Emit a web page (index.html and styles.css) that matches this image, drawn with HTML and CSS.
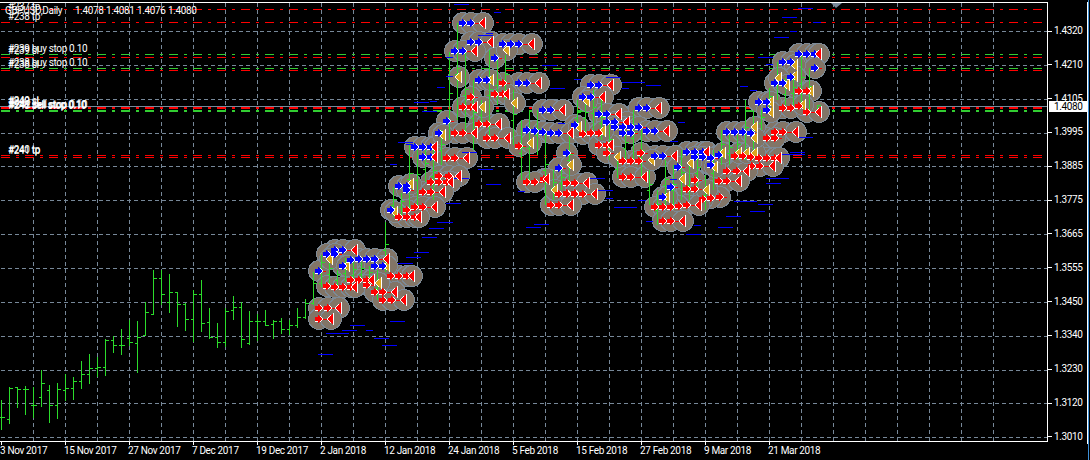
FILE: index.html
```html
<!DOCTYPE html>
<html>
<head>
	<meta charset="UTF-8">
	<title>GBPUSD,Daily</title>
	<link rel="stylesheet" href="styles.css">
</head>
<body>
	<div id="terminal">
		<div id="plot_box">
			<svg id="plot" width="1047" height="438" viewBox="0 3 1047 438">
				<defs>
					<path id="arrow" d="M-4 -2H-1V-4L4 0L-1 4V2H-4Z" />
					<path id="close" d="M-4 0L2 -5V5Z" />
				</defs>
				<g id="layers"></g>
				<polygon class="shift" points="831,3 842,3 836,8" />
				<g class="labels">
					<text x="8" y="10">#237 tp</text>
					<text x="5" y="14">GBPUSD,Daily <tspan x="75">1.4078</tspan> <tspan x="106">1.4081</tspan> <tspan x="137">1.4076</tspan> <tspan x="168">1.4080</tspan></text>
					<text x="8" y="20">#238 tp</text>
					<text x="8" y="52">#239 buy stop 0.10</text>
					<text x="8" y="54">#239 sl</text>
					<text x="8" y="66">#238 buy stop 0.10</text>
					<text x="8" y="68">#238 sl</text>
					<text x="8" y="104">#240 sl</text>
					<text x="8" y="105">#242 sl</text>
					<text x="8" y="108">#241 sell stop 0.10</text>
					<text x="9" y="108">#242 sell stop 0.10</text>
					<text x="8" y="109">#240 sell stop 0.10</text>
					<text x="8" y="153">#240 tp</text>
					<text x="8" y="154">#241 tp</text>
				</g>
			</svg>
		</div>
		<div id="price_axis">
			<div class="price">1.4320</div>
			<div class="price">1.4210</div>
			<div class="price">1.4105</div>
			<div class="price">1.3995</div>
			<div class="price">1.3885</div>
			<div class="price">1.3775</div>
			<div class="price">1.3665</div>
			<div class="price">1.3555</div>
			<div class="price">1.3450</div>
			<div class="price">1.3340</div>
			<div class="price">1.3230</div>
			<div class="price">1.3120</div>
			<div class="price">1.3010</div>
			<div id="bid">1.4080</div>
		</div>
		<div id="time_axis">
			<div class="date">3 Nov 2017</div>
			<div class="date">15 Nov 2017</div>
			<div class="date">27 Nov 2017</div>
			<div class="date">7 Dec 2017</div>
			<div class="date">19 Dec 2017</div>
			<div class="date">2 Jan 2018</div>
			<div class="date">12 Jan 2018</div>
			<div class="date">24 Jan 2018</div>
			<div class="date">5 Feb 2018</div>
			<div class="date">15 Feb 2018</div>
			<div class="date">27 Feb 2018</div>
			<div class="date">9 Mar 2018</div>
			<div class="date">21 Mar 2018</div>
		</div>
	</div>
	<script src="chart.js"></script>
</body>
</html>
```

FILE: styles.css
```css
* {
	padding: 0;
	margin: 0;
	box-sizing: border-box;
}

body {
	background: #000;
	color: #fff;
	font-family: Roboto, "Noto Sans", sans-serif;
	font-size: 10px;
	letter-spacing: -0.35px;
	overflow: hidden;
}

#terminal {
	display: grid;
	grid-template-columns: 1048px 40px;
	grid-template-rows: 440px 18px;
	padding-top: 2px;
	width: 1089px;
	height: 460px;
	border-right: 1px solid #3d8fd6;
}

#plot_box {
	border-top: 1px solid #fff;
	border-right: 1px solid #fff;
	border-bottom: 1px solid #fff;
	height: 440px;
}

#plot {
	display: block;
}

/* 价格轴 */
#price_axis {
	position: relative;
	display: flex;
	flex-direction: column;
	justify-content: space-between;
	padding-top: 22px;
	height: 442px;
	border-right: 1px solid #fff;
}

.price {
	display: flex;
	align-items: center;
	height: 14px;
	line-height: 14px;
}

.price::before {
	content: "";
	width: 4px;
	height: 1px;
	margin-right: 2px;
	background: #fff;
}

#bid {
	position: absolute;
	left: 1px;
	top: 99px;
	width: 38px;
	height: 11px;
	padding-left: 5px;
	line-height: 11px;
	background: #fff;
	color: #000;
}

/* 时间轴 */
#time_axis {
	grid-column: 1 / 3;
	display: flex;
}

.date {
	width: 64px;
	white-space: nowrap;
	line-height: 12px;
}

.date::before {
	content: "";
	display: block;
	width: 1px;
	height: 3px;
	margin-left: 1px;
	background: #fff;
}

.shift {
	fill: #778899;
}

.labels text {
	fill: #fff;
}

.grid {
	stroke: #778899;
	stroke-width: 1;
	stroke-dasharray: 4 3;
	shape-rendering: crispEdges;
}

.bid_line {
	stroke: #778899;
	stroke-width: 1;
	shape-rendering: crispEdges;
}

.level {
	stroke-dasharray: 9 6 3 6;
	stroke-width: 1;
	shape-rendering: crispEdges;
}

.level.red {
	stroke: #ff0000;
}

.level.green {
	stroke: #32cd32;
}

.level.thick {
	stroke-width: 2;
}

.halo {
	fill: #827567;
	stroke: #7d8a96;
	stroke-width: 1;
	shape-rendering: crispEdges;
}

.bar {
	stroke: #2bdc2b;
	stroke-width: 1;
	shape-rendering: crispEdges;
}

.dash {
	stroke: #0000ff;
	stroke-width: 1;
	shape-rendering: crispEdges;
}

.trade_line {
	stroke: #ff0000;
	stroke-width: 1;
	shape-rendering: crispEdges;
}

.mark {
	stroke: #fff;
	stroke-width: 1;
	paint-order: stroke;
	shape-rendering: crispEdges;
}

.mark.b {
	fill: #0000ff;
}

.mark.r,
.mark.t {
	fill: #ff0000;
}

.mark.o {
	fill: #daa520;
}
```

FILE: chart.js
```js
// 柱子: x 由序号决定, [最高, 最低, 开盘, 收盘]
var bars = [
	[400,430,417,417],[387,424,419,388],[387,408,387,389],[386,415,389,389],[387,418,405,405],
	[370,407,397,383],[385,423,390,405],[383,419,405,389],[374,401,390,388],[377,400,388,381],
	[361,389,381,374],[354,384,374,368],[357,377,368,367],[339,376,367,340],[336,353,340,345],
	[329,355,345,345],[320,346,338,342],[321,373,343,337],[302,336,335,312],[270,315,314,278],
	[270,305,278,294],[274,313,302,292],[292,327,292,304],[303,331,304,319],[290,342,319,294],
	[280,332,294,323],[308,339,322,337],[323,348,337,342],[308,347,342,311],[296,320,310,307],
	[302,348,307,339],[311,345,343,321],[314,341,321,321],[310,326,321,325],[320,339,324,321],
	[318,334,321,329],[320,335,329,325],[308,328,325,317],[299,319,317,303],[272,305,303,283],
	[255,287,283,262],[260,283],[270,285],[258,282],[262,282],[262,280],[266,285],[270,300],
	[222,272],[187,217],[193,215],[143,210],[150,205],[150,182],[147,200],[130,165],[52,140],
	[23,120],[50,135],[80,150],[100,125],[50,135],[60,105],[55,100],[90,145],[120,180],
	[110,180],[110,155],[130,205],[170,200],[170,190],[130,185],[100,130],[95,135],[90,130],
	[100,140],[125,160],[155,178],[130,160],[110,160],[130,177],[170,205],[190,225],[160,205],
	[165,210],[150,200],[165,200],[150,190],[175,210],[150,190],[130,165],[135,165],[135,160],
	[100,160],[110,150],[110,130],[88,110],[62,100],[78,105],[75,105],[55,105],[68,110],[105,112]
];

// 交易标记: [类型, y, [箭头x...], 平仓三角x]
var trades = [
	["b",23,[463,471],483],["b",42,[471,479],491],["b",44,[503,511,519],532],["b",51,[455,463],475],
	["b",54,[799,807,815],819],["b",58,[495]],["b",62,[783,791]],["b",68,[815]],["b",77,[791]],
	["b",80,[479,487]],["b",83,[519,527],539],["b",83,[775,783]],["b",85,[591,599],611],
	["b",97,[583,591],603],["b",102,[759,767]],["b",108,[639,647],659],["b",110,[543,551],563],
	["b",110,[767]],["b",114,[599,607],619],["b",121,[447]],["b",122,[607,615],627],
	["b",125,[575]],["b",127,[615,623,631,639]],["b",130,[527]],["b",131,[535]],
	["b",131,[647,655],667],["b",132,[543]],["b",132,[727,735,743]],["b",133,[439]],["b",133,[551,559],571],
	["b",133,[623,631]],["b",133,[751]],["b",147,[415,423,431],435],["b",152,[687,695,703],707],
	["b",153,[567]],["b",155,[719]],["b",156,[655,663],675],["b",157,[423,431],435],
	["b",157,[695,703]],["b",158,[711]],["b",165,[711]],["b",167,[678]],["b",168,[559]],
	["b",186,[399,407]],["b",187,[671]],["b",190,[407]],["b",197,[663]],["b",210,[391]],
	["b",250,[335,343],355],["b",254,[327,335]],["b",259,[359,367,375],387],["b",260,[351]],
	["b",266,[343]],["b",266,[375,383]],["b",271,[319]],
	["r",83,[503]],["r",91,[799,807]],["r",94,[495,503],507],["r",97,[471]],
	["r",107,[463,471],475],["r",106,[799]],["r",108,[783,791]],["r",112,[807],819],
	["r",124,[479,487],499],["r",132,[775,783],796],["r",133,[455,463],475],
	["r",134,[583]],["r",133,[591,599]],["r",138,[487,495],508],["r",138,[767,775]],
	["r",145,[599,607],611],["r",146,[519]],["r",153,[607]],["r",153,[641]],["r",156,[735,743]],
	["r",157,[751]],["r",158,[447,455],467],["r",158,[759,767,775],779],["r",161,[623,631,639]],
	["r",166,[752,760],773],["r",171,[727,737],747],["r",176,[439,449],459],
	["r",177,[623,631],645],["r",179,[544],547],["r",180,[695]],["r",181,[719,727],739],
	["r",182,[431,439,447],451],["r",182,[527,535]],["r",183,[567,575],587],["r",189,[687,695]],
	["r",192,[423,431],443],["r",193,[567,575]],["r",194,[559,567,575,583],595],
	["r",197,[720]],["r",198,[711]],["r",199,[703]],["r",205,[551,559],571],["r",205,[687],699],
	["r",206,[679]],["r",207,[415,423],435],["r",207,[655,663,671]],["r",210,[407]],
	["r",217,[399,407,415],419],["r",221,[663,671],683],
	["r",276,[391,399,407],412],["r",280,[351,359,367],372],["r",285,[367]],
	["r",286,[327]],["r",287,[335,343,351],355],["r",292,[375,383],395],["r",300,[383,392],404],
	["r",308,[319,328],339],["r",319,[319],331]
];

// 橙色三角
var golds = [
	[507,50],[459,77],[491,80],[515,103],[483,107],[443,135],[587,101],[579,127],[531,143],
	[571,165],[618,157],[652,160],[603,131],[411,184],[555,190],[395,212],[683,179],[691,163],
	[715,167],[723,153],[739,153],[747,153],[755,153],[707,190],[667,197],[755,127],[755,138],
	[795,65],[795,76],[779,78],[787,85],[811,91],[771,102],[771,112],[803,105],[330,259],
	[347,266],[387,266],[379,283]
];

// 蓝色短线: [x1, x2, y]
var dashes = [
	[422,437,237],[414,429,252],[406,421,257],[398,413,263],[390,405,321],[350,365,325],
	[342,357,330],[366,373,330],[326,349,333],[374,389,338],[382,397,345],[318,333,354],
	[454,469,4],[494,501,12],[478,493,35],[486,493,33],[446,453,57],[446,453,76],[437,445,87],
	[542,557,65],[550,565,88],[574,581,79],[414,429,102],[430,437,101],[422,437,111],
	[398,413,142],[406,413,144],[462,477,152],[390,397,164],[478,493,169],[453,469,178],
	[486,501,184],[446,461,203],[518,525,191],[526,541,227],[534,549,224],[429,444,228],
	[437,453,222],[606,621,77],[622,645,82],[646,661,85],[622,629,88],[558,565,123],
	[678,685,122],[670,678,141],[590,605,178],[598,613,190],[606,613,198],[638,646,200],
	[614,637,207],[670,677,179],[798,813,137],[782,805,154],[790,805,152],[766,781,178],
	[774,789,178],[766,781,183],[734,757,201],[758,773,204],[750,765,211],[726,741,216],
	[718,733,227],[694,701,225],[686,701,234],[646,653,221],[798,813,8],[813,821,22],
	[782,797,17],[790,797,31],[774,789,37],[758,773,57],[766,773,64],[740,748,86],[750,757,90]
];

var html = "";

function line(cls, x1, y1, x2, y2) {
	html += '<line class="' + cls + '" x1="' + x1 + '" y1="' + y1 + '" x2="' + x2 + '" y2="' + y2 + '" />';
}

function halo(x, y) {
	html += '<circle class="halo" cx="' + x + '" cy="' + y + '" r="10.5" />';
}

function mark(type, x, y) {
	var shape = type === "t" || type === "o" ? "close" : "arrow";
	html += '<use class="mark ' + type + '" href="#' + shape + '" x="' + x + '" y="' + y + '" />';
}

// 网格
for (var i = 0; i < 31; i++) {
	line("grid", 33.5 + i * 32, 3, 33.5 + i * 32, 441);
}
for (var j = 0; j < 13; j++) {
	var gy = Math.round(31 + j * 33.85) + 0.5;
	line("grid", 1, gy, 1047, gy);
}

// 水平价位线
[[9,"red"],[22,"red"],[54,"green"],[57,"red"],[68,"green"],[70,"red"],[155,"red"],[157,"red"]].forEach(function(l) {
	line("level " + l[1], 1, l[0] + 0.5, 1047, l[0] + 0.5);
});
line("level red thick", 1, 108, 1047, 108);
line("level green thick", 1, 111, 1047, 111);
line("bid_line", 0, 106.5, 1048, 106.5);

// 灰色底圈
trades.forEach(function(t) {
	t[2].forEach(function(x) { halo(x, t[1]); });
	if (t[3]) halo(t[3], t[1]);
});
golds.forEach(function(g) { halo(g[0], g[1]); });

// K线
bars.forEach(function(b, k) {
	var x = 1.5 + k * 8;
	var mid = (b[0] + b[1]) >> 1;
	var o = b[2] === undefined ? mid + 3 : b[2];
	var c = b[3] === undefined ? mid - 3 : b[3];
	line("bar", x, b[0], x, b[1]);
	line("bar", x - 3, o + 0.5, x, o + 0.5);
	line("bar", x, c + 0.5, x + 3, c + 0.5);
});

dashes.forEach(function(d) {
	line("dash", d[0], d[2] + 0.5, d[1], d[2] + 0.5);
});

trades.forEach(function(t) {
	var xs = t[2];
	var end = t[3] || xs[xs.length - 1] + 7;
	line("trade_line", xs[0], t[1] + 0.5, end, t[1] + 0.5);
});

golds.forEach(function(g) { mark("o", g[0], g[1]); });
trades.forEach(function(t) {
	t[2].forEach(function(x) { mark(t[0], x, t[1]); });
	if (t[3]) mark("t", t[3], t[1]);
});

document.getElementById("layers").innerHTML = html;
```
